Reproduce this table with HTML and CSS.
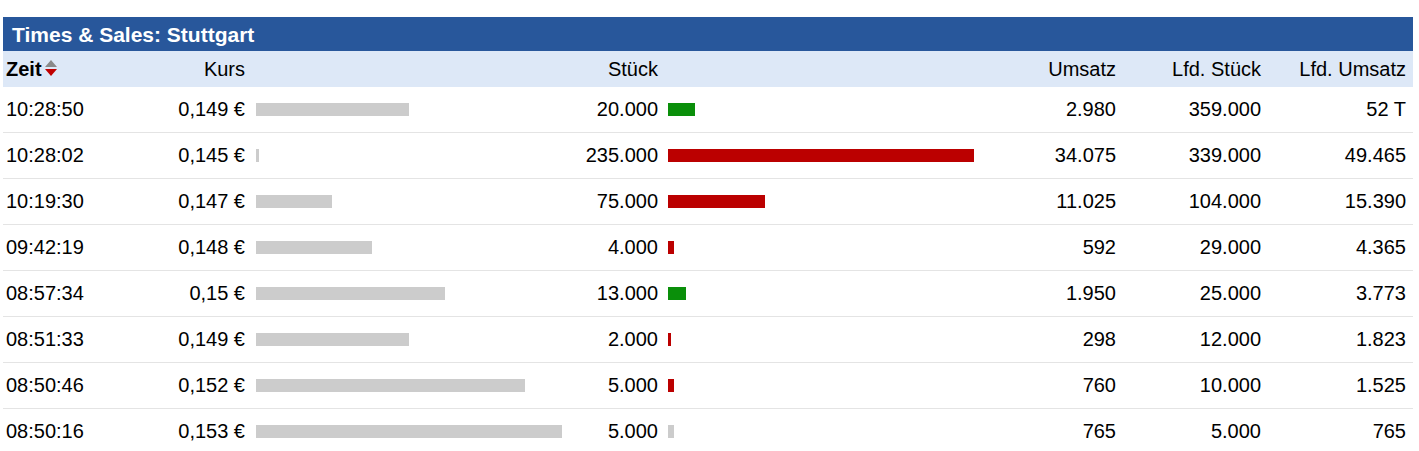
FILE: index.html
```html
<!DOCTYPE html>
<html lang="de">
<head>
<meta charset="utf-8">
<title>Times &amp; Sales: Stuttgart</title>
<link rel="stylesheet" href="styles.css">
</head>
<body>
<div class="panel">
  <div class="title">Times &amp; Sales: Stuttgart</div>
  <div class="grid head">
    <div class="c l"><b>Zeit</b><svg class="sort" width="14" height="16" viewBox="0 0 14 16"><polygon points="7,0 13,7 1,7" fill="#8a8a8a"/><polygon points="1,9 13,9 7,16" fill="#c00000"/></svg></div>
    <div class="c r">Kurs</div>
    <div class="c"></div>
    <div class="c r">Stück</div>
    <div class="c"></div>
    <div class="c r">Umsatz</div>
    <div class="c r">Lfd. Stück</div>
    <div class="c r last">Lfd. Umsatz</div>
  </div>

  <div class="grid row">
    <div class="c l">10:28:50</div><div class="c r">0,149 €</div>
    <div class="c bar"><span class="b grey" style="width:153px"></span></div>
    <div class="c r">20.000</div>
    <div class="c bar2"><span class="b green" style="width:27px"></span></div>
    <div class="c r">2.980</div><div class="c r">359.000</div><div class="c r last">52 T</div>
  </div>
  <div class="grid row">
    <div class="c l">10:28:02</div><div class="c r">0,145 €</div>
    <div class="c bar"><span class="b grey" style="width:3px"></span></div>
    <div class="c r">235.000</div>
    <div class="c bar2"><span class="b red" style="width:306px"></span></div>
    <div class="c r">34.075</div><div class="c r">339.000</div><div class="c r last">49.465</div>
  </div>
  <div class="grid row">
    <div class="c l">10:19:30</div><div class="c r">0,147 €</div>
    <div class="c bar"><span class="b grey" style="width:76px"></span></div>
    <div class="c r">75.000</div>
    <div class="c bar2"><span class="b red" style="width:97px"></span></div>
    <div class="c r">11.025</div><div class="c r">104.000</div><div class="c r last">15.390</div>
  </div>
  <div class="grid row">
    <div class="c l">09:42:19</div><div class="c r">0,148 €</div>
    <div class="c bar"><span class="b grey" style="width:116px"></span></div>
    <div class="c r">4.000</div>
    <div class="c bar2"><span class="b red" style="width:6px"></span></div>
    <div class="c r">592</div><div class="c r">29.000</div><div class="c r last">4.365</div>
  </div>
  <div class="grid row">
    <div class="c l">08:57:34</div><div class="c r">0,15 €</div>
    <div class="c bar"><span class="b grey" style="width:189px"></span></div>
    <div class="c r">13.000</div>
    <div class="c bar2"><span class="b green" style="width:18px"></span></div>
    <div class="c r">1.950</div><div class="c r">25.000</div><div class="c r last">3.773</div>
  </div>
  <div class="grid row">
    <div class="c l">08:51:33</div><div class="c r">0,149 €</div>
    <div class="c bar"><span class="b grey" style="width:153px"></span></div>
    <div class="c r">2.000</div>
    <div class="c bar2"><span class="b red" style="width:3px"></span></div>
    <div class="c r">298</div><div class="c r">12.000</div><div class="c r last">1.823</div>
  </div>
  <div class="grid row">
    <div class="c l">08:50:46</div><div class="c r">0,152 €</div>
    <div class="c bar"><span class="b grey" style="width:269px"></span></div>
    <div class="c r">5.000</div>
    <div class="c bar2"><span class="b red" style="width:6px"></span></div>
    <div class="c r">760</div><div class="c r">10.000</div><div class="c r last">1.525</div>
  </div>
  <div class="grid row">
    <div class="c l">08:50:16</div><div class="c r">0,153 €</div>
    <div class="c bar"><span class="b grey" style="width:306px"></span></div>
    <div class="c r">5.000</div>
    <div class="c bar2"><span class="b grey" style="width:6px"></span></div>
    <div class="c r">765</div><div class="c r">5.000</div><div class="c r last">765</div>
  </div>
</div>
</body>
</html>
```

FILE: styles.css
```css
html, body {
  margin: 0;
  padding: 0;
  background: #ffffff;
}
body {
  font-family: "Liberation Sans", Arial, sans-serif;
  color: #000;
}
.panel {
  margin: 17px 0 0 3px;
  width: 1410px;
}
.title {
  height: 34px;
  line-height: 35px;
  background: #28579b;
  color: #ffffff;
  font-weight: bold;
  font-size: 21px;
  padding-left: 9px;
}
.grid {
  display: grid;
  grid-template-columns: 127px 118px 322px 91px 339px 119px 145px 149px;
  align-items: center;
  font-size: 20px;
}
.head {
  height: 36px;
  background: #dde8f7;
}
.row {
  height: 45px;
  border-bottom: 1px solid #e4e4e4;
}
.c {
  white-space: nowrap;
}
.l {
  padding-left: 3px;
  display: flex;
  align-items: center;
}
.r {
  text-align: right;
  padding-right: 3px;
}
.r.last {
  padding-right: 7px;
}
.sort {
  margin-left: 2px;
  margin-top: -2px;
}
.bar {
  padding-left: 8px;
  display: flex;
  align-items: center;
}
.bar2 {
  padding-left: 7px;
  display: flex;
  align-items: center;
}
.b {
  display: block;
  height: 13px;
}
.grey { background: #cccccc; }
.green { background: #0a8f0a; }
.red { background: #bb0000; }
```
